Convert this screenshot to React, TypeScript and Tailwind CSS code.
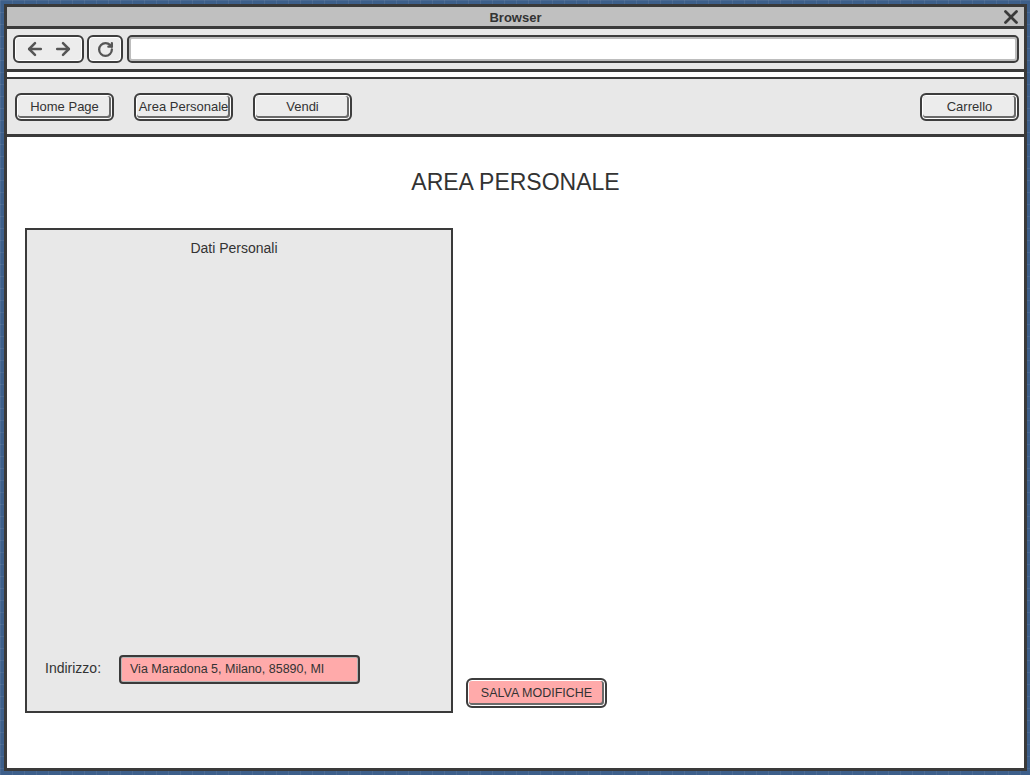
import { ArrowLeft, ArrowRight, RotateCw, X } from "lucide-react";

const NAV = ["Home Page", "Area Personale", "Vendi"];

function SketchButton({ label, className = "" }: { label: string; className?: string }) {
  return (
    <button
      className={`h-[28px] w-[99px] rounded-[6px] border-2 border-[#3d3d3d] bg-[#ececec] text-[13px] text-[#333] shadow-[inset_0_0_0_1px_#ffffff,inset_-1px_-1px_0_2px_#6a6a6a] ${className}`}
    >
      {label}
    </button>
  );
}

export default function App() {
  return (
    <div
      className="w-[1030px] h-[775px] pl-[4px] pt-[4px] pr-[3px] pb-[4px] bg-[#3d5f8a] bg-[linear-gradient(rgba(255,255,255,0.07)_1px,transparent_1px),linear-gradient(90deg,rgba(255,255,255,0.07)_1px,transparent_1px)] bg-[size:12px_12px]"
      style={{ fontFamily: '"Liberation Sans", Arial, sans-serif' }}
    >
      <div className="h-full flex flex-col border-[3px] border-[#3a3a3a] bg-white">
        {/* Title bar */}
        <div className="h-[19px] relative flex items-center justify-center bg-[#c0c0c0] border-b-[3px] border-[#3a3a3a] box-content">
          <span className="text-[13px] font-bold text-[#333] mt-[2px]">Browser</span>
          <X className="absolute right-[2px] top-[-1px] h-[22px] w-[22px] text-[#3a3a3a]" strokeWidth={3} />
        </div>

        {/* Toolbar */}
        <div className="h-[40px] flex items-center gap-[3px] pl-[6px] pr-[5px] bg-[#e8e8e8]">
          <div className="h-[28px] w-[71px] flex items-center justify-center gap-[8px] rounded-[6px] border-2 border-[#3d3d3d] bg-[#ececec] shadow-[inset_0_0_0_1px_#ffffff]">
            <ArrowLeft className="h-[20px] w-[20px] text-[#555]" strokeWidth={3} />
            <ArrowRight className="h-[20px] w-[20px] text-[#555]" strokeWidth={3} />
          </div>
          <div className="h-[28px] w-[36px] flex items-center justify-center rounded-[6px] border-2 border-[#3d3d3d] bg-[#ececec] shadow-[inset_0_0_0_1px_#ffffff]">
            <RotateCw className="h-[17px] w-[17px] text-[#555]" strokeWidth={3.2} />
          </div>
          <div className="h-[28px] flex-1 ml-[1px] rounded-[5px] border-2 border-[#3d3d3d] bg-white shadow-[inset_0_0_0_2px_#bdbdbd]" />
        </div>

        {/* Double separator */}
        <div className="h-[3px] bg-[#3a3a3a]" />
        <div className="h-[5px] bg-white" />
        <div className="h-[2px] bg-[#3a3a3a]" />

        {/* Nav bar */}
        <div className="h-[55px] flex items-center pl-[8px] pr-[5px] bg-[#e8e8e8] border-b-[3px] border-[#3a3a3a] box-content">
          <div className="flex gap-[20px]">
            {NAV.map((n) => (
              <SketchButton key={n} label={n} />
            ))}
          </div>
          <div className="flex-1" />
          <SketchButton label="Carrello" />
        </div>

        {/* Content */}
        <div className="flex-1 flex flex-col pl-[18px]">
          <h1 className="mt-[29px] h-[32px] leading-[32px] text-center text-[23px] text-[#333] pr-[18px]">
            AREA PERSONALE
          </h1>
          <div className="mt-[30px] flex items-end gap-[13px]">
            <div className="w-[428px] h-[485px] flex flex-col border-2 border-[#3a3a3a] bg-[#e8e8e8]">
              <div className="mt-[8px] pr-[10px] text-center text-[14px] leading-[20px] text-[#333]">Dati Personali</div>
              <div className="flex-1" />
              <div className="mb-[27px] pl-[18px] flex items-center gap-[10px]">
                <span className="w-[64px] text-[14px] text-[#333] -mt-[2px]">Indirizzo:</span>
                <div className="h-[29px] w-[241px] flex items-center pl-[9px] rounded-[4px] border-2 border-[#3a3a3a] bg-[#ffaaaa] shadow-[inset_0_0_0_1px_#b4b4b4] text-[12.5px] text-[#333]">
                  Via Maradona 5, Milano, 85890, MI
                </div>
              </div>
            </div>
            <button className="mb-[5px] h-[30px] w-[141px] rounded-[6px] border-2 border-[#3d3d3d] bg-[#ffaaaa] shadow-[inset_0_0_0_1px_#ffffff,inset_-1px_-1px_0_2px_#6a6a6a] text-[12.5px] text-[#333]">
              SALVA MODIFICHE
            </button>
          </div>
        </div>
      </div>
    </div>
  );
}
